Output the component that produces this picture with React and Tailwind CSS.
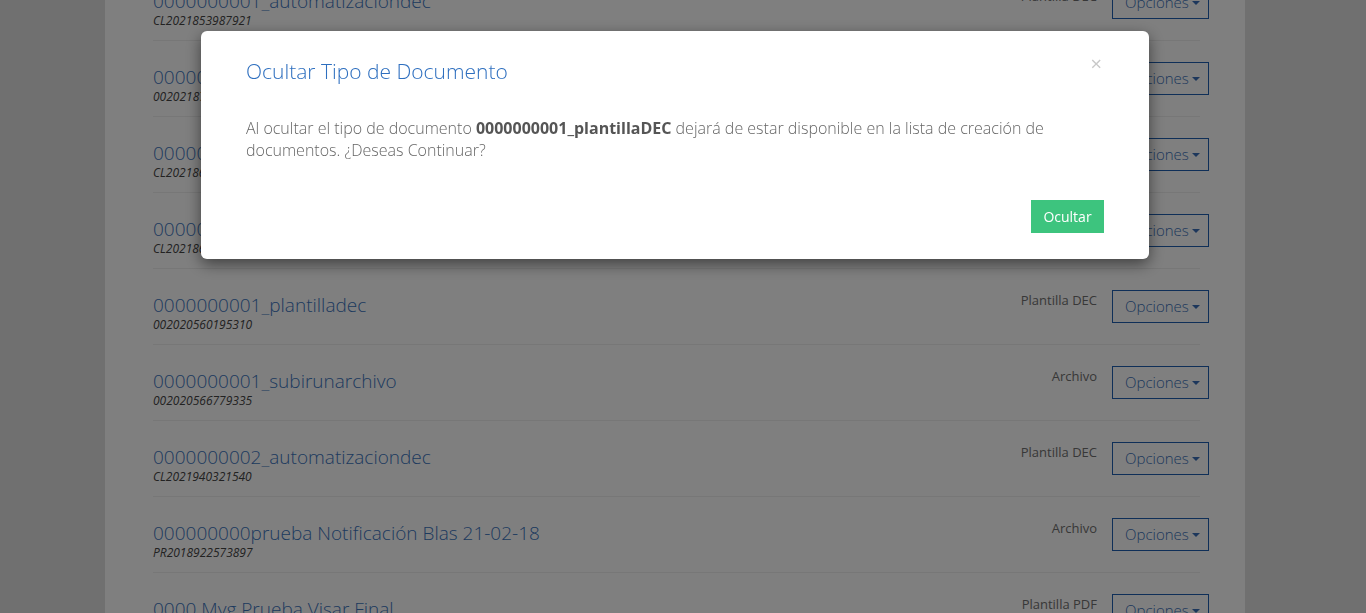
import React from 'react'

const docs = [
  { name: '0000000001_automatizaciondec', code: 'CL2021853987921', type: 'Plantilla DEC' },
  { name: '0000000001_contratoarriendo', code: '002021875412093', type: 'Plantilla DEC' },
  { name: '0000000001_firmaavanzada', code: 'CL2021862204718', type: 'Plantilla DEC' },
  { name: '0000000001_notificacion', code: 'CL2021864410352', type: 'Plantilla DEC' },
  { name: '0000000001_plantilladec', code: '002020560195310', type: 'Plantilla DEC' },
  { name: '0000000001_subirunarchivo', code: '002020566779335', type: 'Archivo' },
  { name: '0000000002_automatizaciondec', code: 'CL2021940321540', type: 'Plantilla DEC' },
  { name: '000000000prueba Notificación Blas 21-02-18', code: 'PR2018922573897', type: 'Archivo' },
  { name: '0000 Myg Prueba Visar Final', code: 'CL2019011254873', type: 'Plantilla PDF' },
]

function Caret() {
  return (
    <svg width="8" height="4" viewBox="0 0 8 4" className="ml-[3px] mt-[1px]">
      <path d="M0 0h8L4 4z" fill="currentColor" />
    </svg>
  )
}

function DocRow({ doc }) {
  return (
    <div className="flex items-start justify-between border-b border-[#eeeeee] pt-[21px] pb-[11px]">
      <div className="mt-[5px]">
        <div className="text-[19px] leading-[20px] font-light text-[#3b74bd]">{doc.name}</div>
        <div className="mt-[2px] text-[12px] leading-[16px] italic font-normal text-[#444]">{doc.code}</div>
      </div>
      <div className="flex items-start -mr-[9px]">
        <span className="mt-[1px] mr-[15px] text-[13px] leading-[18px] font-normal text-[#707070]">{doc.type}</span>
        <button className="flex items-center h-[33px] w-[97px] pl-[12px] border border-[#1f5fb0] text-[15px] font-light text-[#3a6fb8]">
          Opciones
          <Caret />
        </button>
      </div>
    </div>
  )
}

export default function App() {
  return (
    <div className="h-[613px] overflow-hidden bg-[#e0e0e0]" style={{ fontFamily: '"Open Sans", "Liberation Sans", sans-serif' }}>
      <div className="ml-[105px] w-[1140px] h-full flex flex-col bg-white pl-[48px] pr-[45px]">
        <div className="-mt-[35px]">
          {docs.map(d => <DocRow key={d.name} doc={d} />)}
        </div>
      </div>

      {/* Modal */}
      <div className="fixed inset-0 bg-black/50">
        <div className="ml-[201px] mt-[31px] w-[948px] bg-white rounded-[6px] shadow-[0_5px_15px_rgba(0,0,0,0.5)] pl-[45px] pr-[45px] pt-[29px] pb-[26px]">
          <div className="flex items-start justify-between">
            <h4 className="text-[21px] leading-[23px] font-light text-[#2e6fbf]">Ocultar Tipo de Documento</h4>
            <button className="-mt-[6px] mr-[2px] text-[20px] leading-[20px] text-[#c8c8c8]">×</button>
          </div>
          <p className="mt-[34px] text-[16px] leading-[22px] font-light text-[#666]">
            Al ocultar el tipo de documento <b className="font-bold text-[#555]">0000000001_plantillaDEC</b> dejará de estar disponible en la lista de creación de documentos. ¿Deseas Continuar?
          </p>
          <div className="mt-[39px] flex justify-end">
            <button className="h-[33px] w-[73px] bg-[#3dc47e] text-white text-[14px]">Ocultar</button>
          </div>
        </div>
      </div>
    </div>
  )
}
